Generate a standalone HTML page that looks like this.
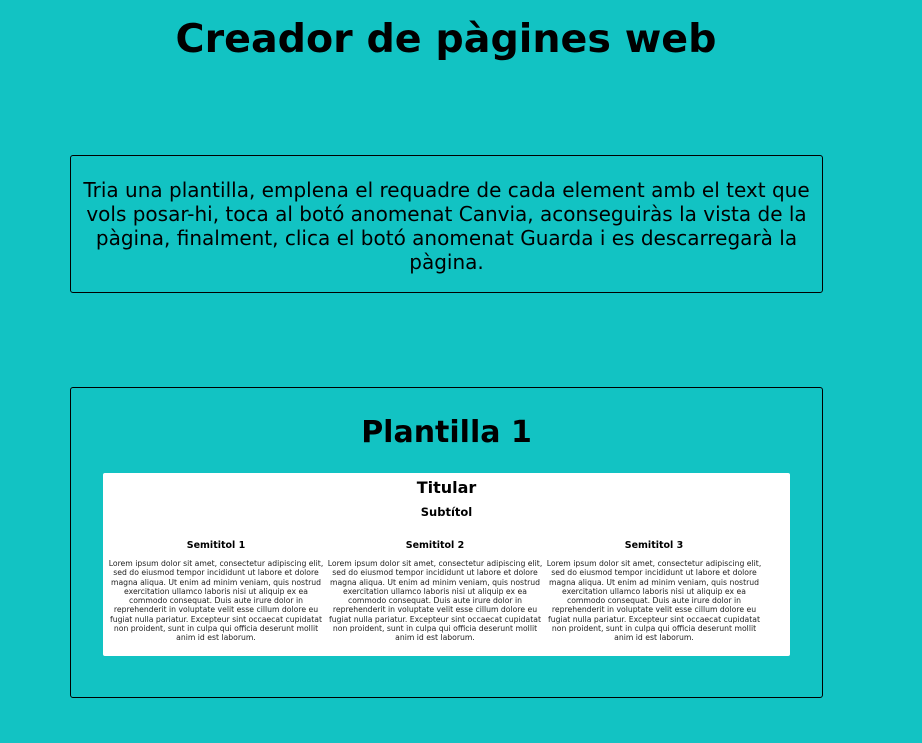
<!DOCTYPE html>
<html><head><meta charset="utf-8"><style>
body{margin:0;background:#12c3c3;font-family:"DejaVu Sans",sans-serif;width:922px;height:743px;overflow:hidden;position:relative;color:#000}
h1{position:absolute;top:14px;left:0;width:892px;text-align:center;margin:0;font-size:39.6px;font-weight:bold;line-height:50px}
.b1{position:absolute;left:70px;top:155px;width:751px;height:136px;border:1px solid #000;border-radius:3px}
.b1 p{margin:22px 4px 0;text-align:center;font-size:20px;line-height:24px}
.b2{position:absolute;left:70px;top:387px;width:751px;height:309px;border:1px solid #000;border-radius:3px}
.b2 h2{margin:26px 0 0;text-align:center;font-size:30px;line-height:38px}
.w{position:absolute;left:32px;top:85px;width:687px;height:183px;background:#fff;border-radius:2px}
.w h3{margin:5px 0 0;text-align:center;font-size:16px;line-height:19px}
.w h4{margin:8px 0 0;text-align:center;font-size:11.5px;line-height:14px}
.cols{position:absolute;left:3px;top:67px;width:660px}
.c{position:absolute;width:220px;text-align:center}
.c h5{margin:0;font-size:9.5px;line-height:12px}
.c p{margin:7px 0 0;font-size:7.7px;line-height:9.3px;color:#222}
</style></head><body>
<h1>Creador de pàgines web</h1>
<div class="b1"><p>Tria una plantilla, emplena el requadre de cada element amb el text que vols posar-hi, toca al botó anomenat Canvia, aconseguiràs la vista de la pàgina, finalment, clica el botó anomenat Guarda i es descarregarà la pàgina.</p></div>
<div class="b2"><h2>Plantilla 1</h2>
<div class="w"><h3>Titular</h3><h4>Subtítol</h4>
<div class="cols">
<div class="c" style="left:0"><h5>Semititol 1</h5><p>Lorem ipsum dolor sit amet, consectetur adipiscing elit, sed do eiusmod tempor incididunt ut labore et dolore magna aliqua. Ut enim ad minim veniam, quis nostrud exercitation ullamco laboris nisi ut aliquip ex ea commodo consequat. Duis aute irure dolor in reprehenderit in voluptate velit esse cillum dolore eu fugiat nulla pariatur. Excepteur sint occaecat cupidatat non proident, sunt in culpa qui officia deserunt mollit anim id est laborum.</p></div>
<div class="c" style="left:219px"><h5>Semititol 2</h5><p>Lorem ipsum dolor sit amet, consectetur adipiscing elit, sed do eiusmod tempor incididunt ut labore et dolore magna aliqua. Ut enim ad minim veniam, quis nostrud exercitation ullamco laboris nisi ut aliquip ex ea commodo consequat. Duis aute irure dolor in reprehenderit in voluptate velit esse cillum dolore eu fugiat nulla pariatur. Excepteur sint occaecat cupidatat non proident, sunt in culpa qui officia deserunt mollit anim id est laborum.</p></div>
<div class="c" style="left:438px"><h5>Semititol 3</h5><p>Lorem ipsum dolor sit amet, consectetur adipiscing elit, sed do eiusmod tempor incididunt ut labore et dolore magna aliqua. Ut enim ad minim veniam, quis nostrud exercitation ullamco laboris nisi ut aliquip ex ea commodo consequat. Duis aute irure dolor in reprehenderit in voluptate velit esse cillum dolore eu fugiat nulla pariatur. Excepteur sint occaecat cupidatat non proident, sunt in culpa qui officia deserunt mollit anim id est laborum.</p></div>
</div></div></div>
</body></html>
